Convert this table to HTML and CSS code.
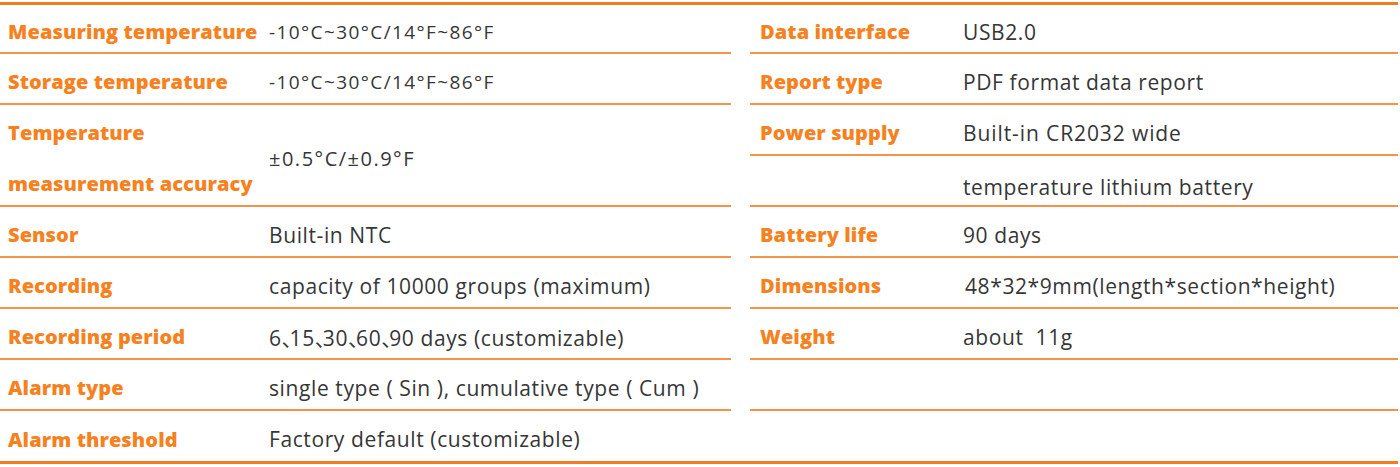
FILE: index.html
```html
<!DOCTYPE html>
<html lang="en">
<head>
<meta charset="utf-8">
<title>Specifications</title>
<link rel="stylesheet" href="styles.css">
</head>
<body>
<div class="specs">
  <div class="col col-left">
    <div class="row first"><div class="k">Measuring temperature</div><div class="v small">-10°C~30°C/14°F~86°F</div></div>
    <div class="row"><div class="k">Storage temperature</div><div class="v small">-10°C~30°C/14°F~86°F</div></div>
    <div class="row double"><div class="k">Temperature<br>measurement accuracy</div><div class="v mid">±0.5°C/±0.9°F</div></div>
    <div class="row"><div class="k">Sensor</div><div class="v">Built-in NTC</div></div>
    <div class="row"><div class="k">Recording</div><div class="v">capacity of 10000 groups (maximum)</div></div>
    <div class="row"><div class="k">Recording period</div><div class="v">6<span class="sep">、</span>15<span class="sep">、</span>30<span class="sep">、</span>60<span class="sep">、</span>90 days (customizable)</div></div>
    <div class="row"><div class="k">Alarm type</div><div class="v">single type ( Sin ), cumulative type ( Cum )</div></div>
    <div class="row last"><div class="k">Alarm threshold</div><div class="v">Factory default (customizable)</div></div>
  </div>
  <div class="col col-right">
    <div class="row first"><div class="k">Data interface</div><div class="v">USB2.0</div></div>
    <div class="row"><div class="k">Report type</div><div class="v">PDF format data report</div></div>
    <div class="row"><div class="k">Power supply</div><div class="v wide">Built-in CR2032 wide</div></div>
    <div class="row low"><div class="k"></div><div class="v">temperature lithium battery</div></div>
    <div class="row"><div class="k">Battery life</div><div class="v">90 days</div></div>
    <div class="row"><div class="k">Dimensions</div><div class="v dims">48*32*9mm(length*section*height)</div></div>
    <div class="row"><div class="k">Weight</div><div class="v">about&nbsp; 11g</div></div>
    <div class="row"><div class="k"></div><div class="v"></div></div>
    <div class="row last"><div class="k"></div><div class="v"></div></div>
  </div>
</div>
</body>
</html>
```

FILE: styles.css
```css
html, body {
  margin: 0;
  padding: 0;
  background: #ffffff;
}

body {
  padding-top: 2px;
}

.specs {
  display: flex;
  gap: 19px;
  width: 1398px;
  height: 462px;
  box-sizing: border-box;
  border-top: 3px solid #f47b20;
  border-bottom: 3px solid #f47b20;
}

.col {
  display: flex;
  flex-direction: column;
}

.col-left { width: 731px; }
.col-right { width: 648px; }

.row {
  display: flex;
  align-items: center;
  height: 51px;
  flex: none;
  box-sizing: border-box;
  border-bottom: 2px solid #f7924a;
  padding-top: 6px;
}

.row.first { height: 49px; }
.row.double { height: 102px; }
.row.low { padding-top: 12px; }
.row.last {
  border-bottom: none;
  flex: 1 1 auto;
}

.k {
  flex: none;
  box-sizing: border-box;
  font-family: "Open Sans", "Liberation Sans", sans-serif;
  font-weight: 800;
  font-size: 20px;
  color: #f5821f;
  letter-spacing: 0.1px;
  white-space: nowrap;
}

.row.double .k { line-height: 51px; padding-top: 0; }

.col-left .k { width: 269px; padding-left: 8px; }
.col-right .k { width: 213px; padding-left: 10px; }

.v {
  font-family: "Open Sans", "Liberation Sans", sans-serif;
  font-size: 21px;
  letter-spacing: 0.6px;
  color: #363636;
  white-space: nowrap;
}

.v.small {
  font-size: 19px;
  letter-spacing: 1.4px;
}

.v.mid {
  font-size: 20px;
  letter-spacing: 1.5px;
}

.v.wide {
  letter-spacing: 0.9px;
}

.v.dims {
  padding-left: 2px;
}

.sep {
  font-family: "Noto Sans CJK SC", sans-serif;
  letter-spacing: -13px;
}
```
